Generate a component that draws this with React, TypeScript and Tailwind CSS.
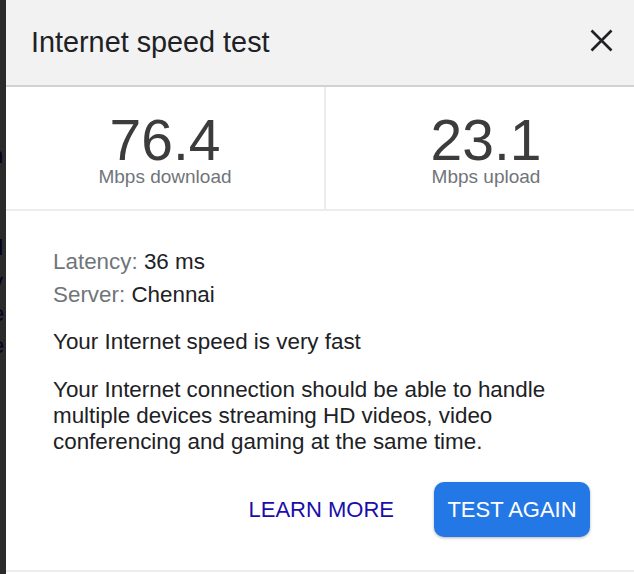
import React from "react";

export default function App() {
  return (
    <div
      className="w-[634px] h-[574px] overflow-hidden flex bg-white"
      style={{ fontFamily: '"Liberation Sans", Arial, sans-serif' }}
    >
      {/* backdrop strip with page behind */}
      <div className="relative w-[6px] shrink-0 h-full overflow-hidden bg-white text-[22px] text-[#1a0dab]">
        <span className="absolute left-[-9px] top-[145px] leading-none">n</span>
        <span className="absolute left-[-9px] top-[237px] leading-none">d</span>
        <span className="absolute left-[-8px] top-[271px] leading-none">v</span>
        <span className="absolute left-[-8px] top-[303px] leading-none">e</span>
        <span className="absolute left-[-8px] top-[335px] leading-none">e</span>
        <div className="absolute inset-0 bg-black/[0.83]" />
      </div>

      {/* dialog */}
      <div className="w-[642px] shrink-0 flex flex-col">
        <div className="h-[87px] bg-[#f2f2f2] border-b-2 border-[#d2d2d2] flex items-start justify-between pl-[25px] pr-[35px]">
          <div className="pt-[25px] text-[28.8px] leading-[34px] text-[#202124]">Internet speed test</div>
          <svg className="mt-[29px]" width="23" height="23" viewBox="0 0 23 23">
            <path d="M1.5 1.5 L21.5 21.5 M21.5 1.5 L1.5 21.5" stroke="#202124" strokeWidth="2.6" />
          </svg>
        </div>

        <div className="h-[124px] flex border-b-2 border-[#ececec]">
          <div className="w-[320px] border-r-2 border-[#ececec] flex flex-col items-center pt-[28px]">
            <div className="text-[57px] leading-[50px] text-[#3c3c3c]">76.4</div>
            <div className="mt-[2px] text-[19px] leading-[19px] text-[#70757a]">Mbps download</div>
          </div>
          <div className="w-[320px] flex flex-col items-center pt-[28px]">
            <div className="text-[57px] leading-[50px] text-[#3c3c3c]">23.1</div>
            <div className="mt-[2px] text-[19px] leading-[19px] text-[#70757a]">Mbps upload</div>
          </div>
        </div>

        <div className="pl-[47px] pr-[58px] pt-[34px] pb-[33px] border-b-2 border-[#ececec] text-[22.4px] text-[#202124]">
          <div className="leading-[33px]">
            <span className="text-[#70757a]">Latency:</span> 36 ms
          </div>
          <div className="leading-[33px]">
            <span className="text-[#70757a]">Server:</span> Chennai
          </div>
          <div className="mt-[18px] leading-[26px]">Your Internet speed is very fast</div>
          <div className="mt-[22px] leading-[26px]">
            Your Internet connection should be able to handle
            <br />
            multiple devices streaming HD videos, video
            <br />
            conferencing and gaming at the same time.
          </div>
          <div className="mt-[27px] flex justify-end items-center gap-[40px]">
            <span className="text-[22px] text-[#1a0dab]">LEARN MORE</span>
            <button className="h-[55px] w-[156px] rounded-[10px] bg-[#2378e6] text-white text-[22px] shadow-[0_1px_3px_rgba(0,0,0,0.3)]">
              TEST AGAIN
            </button>
          </div>
        </div>
      </div>
    </div>
  );
}
